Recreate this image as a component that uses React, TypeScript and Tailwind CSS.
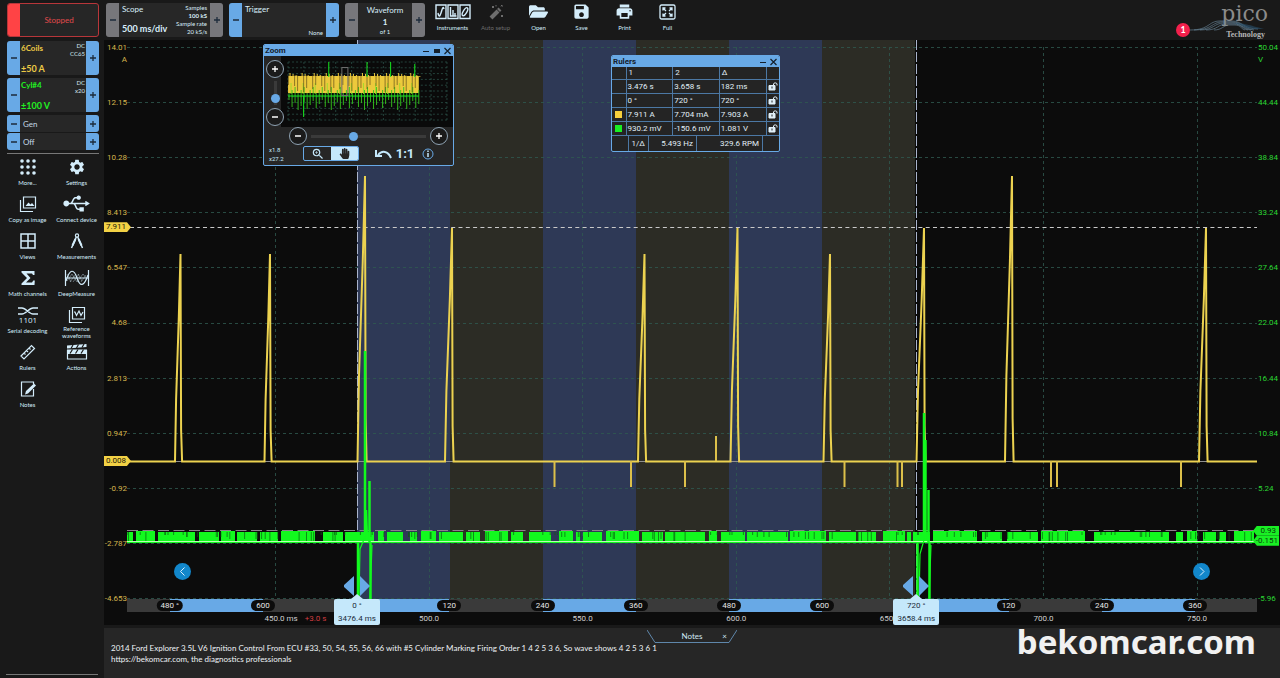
import type { FocusEvent, ReactNode } from "react";
import { FaFolderOpen, FaHandPaper, FaUsb } from "react-icons/fa";
import { MdPrint, MdSave, MdSettings, MdZoomIn } from "react-icons/md";

const LEFT_AXIS = ["14.01", "12.15", "10.28", "8.413", "6.547", "4.68", "2.813", "0.947", "-0.92", "-2.787", "-4.653"];
const RIGHT_AXIS = ["50.04", "44.44", "38.84", "33.24", "27.64", "22.04", "16.44", "10.84", "5.24", "", "-5.96"];

// degree strip under the plot, size in degrees
const PHASES: { label?: string; size: number; blue?: boolean }[] = [
  { size: 55 },
  { label: "480 °", size: 120, blue: true },
  { label: "600", size: 120 },
  { size: 120, blue: true },
  { label: "120", size: 120 },
  { label: "240", size: 120, blue: true },
  { label: "360", size: 120 },
  { label: "480", size: 120, blue: true },
  { label: "600", size: 120 },
  { size: 120, blue: true },
  { label: "120", size: 120 },
  { label: "240", size: 120, blue: true },
  { label: "360", size: 80 },
];

const TIMES: { label?: string; size: number }[] = [
  { size: 483 },
  { size: 500 },
  { label: "500.0", size: 500 },
  { label: "550.0", size: 500 },
  { label: "600.0", size: 500 },
  { label: "650.0", size: 500 },
  { label: "700.0", size: 500 },
  { label: "750.0", size: 195 },
];

// coil current pulses: start, peak x, peak y
const PULSES = [
  [48, 53.5, 214],
  [137.5, 143, 214],
  [230.5, 238, 136],
  [318, 325, 188],
  [511, 517.5, 214],
  [603.5, 610.5, 188],
  [696.5, 703, 214],
  [789.5, 797, 188],
  [878, 885, 136],
  [1072, 1079, 188],
];

const BLIPS = [
  [427.5, 447],
  [504, 447],
  [558, 447],
  [589, 396],
  [717.5, 447],
  [770.5, 447],
  [775, 447],
  [924, 447],
  [930, 447],
  [1054, 447],
];

// wide gaps in the green burst: x, width
const GAPS = [
  [6, 3], [28, 3], [68, 4], [92, 2], [108, 2], [130, 3], [151, 3], [188, 8], [216, 2], [247, 4], [257, 3],
  [276, 7], [290, 4], [309, 3], [336, 3], [353, 5], [381, 3], [396, 6], [424, 8], [446, 3], [453, 3],
  [475, 4], [512, 3], [536, 2], [578, 4], [590, 4], [618, 2], [661, 2], [699, 3], [729, 2], [749, 7],
  [778, 2], [784, 2], [803, 3], [850, 5], [875, 5], [911, 3], [958, 9], [1042, 7], [1056, 4], [1070, 6],
  [1089, 3], [1099, 8],
];

const SPLITS = Array.from({ length: 150 }, (_, i) => (i * 47.3 + ((i * i * 13) % 29)) % 1128);

const pulsePath = () => {
  let d = "M0 421.5";
  for (const [x, px, py] of PULSES) {
    const w = px - x;
    const h = 421 - py;
    d += `H${x}L${x + w * 0.2} ${421 - h * 0.3}L${x + w * 0.45} ${421 - h * 0.5}L${x + w * 0.7} ${421 - h * 0.7}L${px} ${py}L${px + 0.6} ${py + h * 0.85}L${px + 1.6} 421.5`;
  }
  return d + "H1131";
};

function Plus({ minus }: { minus?: boolean }) {
  return (
    <svg viewBox="0 0 8 8" className="size-2" stroke="currentColor" strokeWidth="1.3">
      <path d={minus ? "M1 4h6" : "M1 4h6M4 1v6"} />
    </svg>
  );
}

function Step({ minus, gray, label }: { minus?: boolean; gray?: boolean; label: string }) {
  return (
    <button
      type="button"
      aria-label={label}
      className={[
        "flex w-[13px] shrink-0 items-center justify-center text-[#1d2b3b]",
        gray ? "bg-[#77777b]" : "bg-[#68a9e6]",
      ].join(" ")}
    >
      <Plus minus={minus} />
    </button>
  );
}

function Panel({ gray, name, className, children }: { gray?: boolean; name: string; className: string; children: ReactNode }) {
  return (
    <div className={`flex overflow-hidden rounded-[3px] bg-[#272727] ${className}`}>
      <Step minus gray={gray} label={`${name} down`} />
      {children}
      <Step gray={gray} label={`${name} up`} />
    </div>
  );
}

function Channel({ name, range, info, color }: { name: string; range: string; info: string[]; color: string }) {
  return (
    <Panel name={name} className="h-[34px]">
      <div className={`flex flex-1 flex-col justify-between pt-px pl-px ${color}`}>
        <div className="flex justify-between">
          <span className="text-[8px] leading-3 font-bold">{name}</span>
          <span className="pr-px text-right text-[6px] leading-2 text-[#d3e3ec]">
            {info[0]}
            <br />
            {info[1]}
          </span>
        </div>
        <span className="text-[9px] leading-3 font-bold">{range}</span>
      </div>
    </Panel>
  );
}

function Icon({ children, wide }: { children: ReactNode; wide?: boolean }) {
  return (
    <svg
      viewBox={wide ? "0 0 28 18" : "0 0 18 18"}
      className={wide ? "h-[18px] w-7" : "size-[18px]"}
      fill="none"
      stroke="currentColor"
      strokeWidth="1.2"
    >
      {children}
    </svg>
  );
}

const TOOLS: { label: string; icon: ReactNode }[] = [
  {
    label: "More...",
    icon: (
      <Icon>
        {[3, 9, 15].map((y) => [3, 9, 15].map((x) => <circle key={`${x}-${y}`} cx={x} cy={y} r="1.8" fill="currentColor" stroke="none" />))}
      </Icon>
    ),
  },
  { label: "Settings", icon: <MdSettings className="size-[18px]" /> },
  {
    label: "Copy as image",
    icon: (
      <Icon>
        <path d="M4.5 2h12v11h-12zM1.5 5v11.5H14" />
        <path d="M6.500 11l3-3.500 2 2 1.500-1.500 2.500 3z" fill="currentColor" stroke="none" />
      </Icon>
    ),
  },
  { label: "Connect device", icon: <FaUsb className="h-[21px] w-[27px]" /> },
  {
    label: "Views",
    icon: (
      <Icon>
        <path d="M2 2h14v14H2zM9 2v14M2 9h14" strokeWidth="1.500" />
      </Icon>
    ),
  },
  {
    label: "Measurements",
    icon: (
      <Icon>
        <circle cx="9" cy="3.500" r="1.600" />
        <path d="M8.300 5L3.500 16M9.700 5l4.800 11" strokeWidth="1.500" />
        <path d="M7.500 7l-3 6.500M10.500 7l3 6.500" strokeWidth="2" />
      </Icon>
    ),
  },
  {
    label: "Math channels",
    icon: (
      <Icon>
        <path d="M2.500 2h13v4h-1.500l-1-1.500H7.500l4 4.500-4.500 4.500h6l1.300-2h1.500L15.500 16h-13v-1.500L8 9 2.500 3.500z" fill="currentColor" stroke="none" />
      </Icon>
    ),
  },
  {
    label: "DeepMeasure",
    icon: (
      <Icon wide>
        <path d="M2.500 1v16M25.500 1v16M2.500 9h23" />
        <path d="M3 12C7-1 11 0 14 9s7 9 11-3" />
        <path d="M4 12l5-7M7 13l6-8M10 13l6-8M14 13l6-8M18 13l5-7M4 5l4 8M9 5l5 8M15 5l4 7M20 5l4 5" strokeWidth="0.400" />
      </Icon>
    ),
  },
  {
    label: "Serial decoding",
    icon: (
      <svg viewBox="0 0 20 18" className="h-[18px] w-5" fill="none" stroke="currentColor" strokeWidth="1.300">
        <path d="M0 2h4c4 0 7 6 11 6h5M0 8h4C8 8 11 2 15 2h5" />
        <text x="10" y="17" textAnchor="middle" fill="currentColor" stroke="none" className="font-['Open_Sans'] text-[8px]">
          1101
        </text>
      </svg>
    ),
  },
  {
    label: "Reference waveforms",
    icon: (
      <Icon>
        <path d="M4.500 1.500h12v11.500h-12zM1.500 4v12.500H14" />
        <path d="M6 6h1l1.500 3.500L11 5l2 4.500L15 6" />
      </Icon>
    ),
  },
  {
    label: "Rulers",
    icon: (
      <Icon>
        <path d="M2 13L12.500 2.500l3 3L5 16zM5 10l1.500 1.500M7.500 7.500L9 9M10 5l1.500 1.500" />
      </Icon>
    ),
  },
  {
    label: "Actions",
    icon: (
      <svg viewBox="0 0 22 18" className="h-[18px] w-[22px]" fill="none" stroke="currentColor" strokeWidth="1.200">
        <path d="M1.500 7.500h19V16h-19z" />
        <path d="M1 2.500L20.500 1v3L1 5.500zM1 6.500h20V11H1z" fill="currentColor" stroke="none" />
        <path d="M5 5.500L7 2M10.500 5l2-3.500M16 4.500l2-3.500M4 10.500l2.500-4M9.500 10.500l2.500-4M15 10.500l2.500-4" stroke="#191919" />
      </svg>
    ),
  },
  {
    label: "Notes",
    icon: (
      <Icon>
        <path d="M14.500 9v7h-12V2h12v2" />
        <path d="M6 14.500l1-3.500 8-7.500 2 2-8 8z" fill="currentColor" stroke="none" />
      </Icon>
    ),
  },
];

const ACTIONS: { label: string; icon: ReactNode; off?: boolean }[] = [
  {
    label: "Instruments",
    icon: (
      <svg viewBox="0 0 36 16" className="h-4 w-9" fill="none" stroke="currentColor">
        <path d="M1 1h10v13.500H1zM13 1h10v13.500H13zM25 1h10v13.500H25z" strokeWidth="1.400" />
        <path d="M3 9c1 5 2 3 3 0s2-8 3-4M15.500 3v9h6M18 6v6M20 9v3" strokeWidth="1.400" />
        <ellipse cx="30" cy="7.700" rx="1.800" ry="4.500" transform="rotate(30 30 7.700)" strokeWidth="1.400" />
      </svg>
    ),
  },
  {
    label: "Auto setup",
    off: true,
    icon: (
      <svg viewBox="0 0 16 16" className="size-4" fill="none" stroke="currentColor">
        <path d="M3 14l7-7" strokeWidth="4" />
        <path d="M10.500 6.500l1.500-1.500" strokeWidth="4" />
        <path d="M4 2l2 2M6 2L4 4M13 1l1.500 1.500M14.500 1L13 2.500M13 11l2 2M15 11l-2 2M8 1v1.500" />
      </svg>
    ),
  },
  { label: "Open", icon: <FaFolderOpen className="h-[17px] w-[19px]" /> },
  { label: "Save", icon: <MdSave className="size-[19px]" /> },
  { label: "Print", icon: <MdPrint className="size-[19px]" /> },
  {
    label: "Full",
    icon: (
      <svg viewBox="0 0 17 16" className="h-4 w-[17px]" fill="none" stroke="currentColor" strokeWidth="1.300">
        <rect x="1" y="1" width="15" height="14" rx="1.500" />
        <path d="M4 6.500V4h2.500M4 4l3 3M10.500 4H13v2.500M13 4l-3 3M4 9.500V12h2.500M4 12l3-3M13 9.500V12h-2.500M13 12l-3-3" />
      </svg>
    ),
  },
];

function Sidebar() {
  return (
    <aside className="flex w-[104px] shrink-0 flex-col pt-[3px] pb-[3px]">
      <div className="flex-1 px-[7px]">
        <button
          type="button"
          className="flex h-[34px] w-[92px] overflow-hidden rounded-[3px] border border-[#b8363a] bg-[#262626] text-[8px] text-[#e04a4c]"
        >
          <span className="h-full w-3 shrink-0 bg-[#ff4345]" />
          <span className="flex h-full flex-1 items-center justify-center">Stopped</span>
        </button>
        <div className="mt-1 flex w-[92px] flex-col gap-[3px]">
          <Channel name="6Coils" range="±50 A" info={["DC", "CC65"]} color="text-[#edcb45]" />
          <Channel name="Cyl#4" range="±100 V" info={["DC", "x20"]} color="text-[#22f022]" />
          <div className="flex flex-col gap-px text-[8px] text-[#c3d8e4]">
            {["Gen", "Off"].map((t) => (
              <Panel key={t} name={t} className="h-[17px]">
                <span className="flex flex-1 items-center pl-[3px]">{t}</span>
              </Panel>
            ))}
          </div>
          <hr className="border-t border-[#777777]" />
        </div>
        <div className="mt-[2px] -ml-1 grid w-[98px] grid-cols-2">
          {TOOLS.map((t) => (
            <button
              key={t.label}
              type="button"
              className={[
                "flex h-[37px] flex-col items-center text-center text-[6px] text-[#d4edfb]",
                t.label === "Reference waveforms" ? "leading-[7px]" : "leading-3",
              ].join(" ")}
            >
              <span className="flex h-[21px] items-center">{t.icon}</span>
              <span>{t.label}</span>
            </button>
          ))}
        </div>
      </div>
      <hr className="mx-[6px] border-t border-[#777777]" />
    </aside>
  );
}

function Toolbar() {
  return (
    <header className="flex h-10 items-start pt-[3px] pl-[2px] text-[#d9eefa]">
      <Panel gray name="Scope" className="h-[34px] w-[117px]">
        <div className="flex flex-1 justify-between px-[3px]">
          <div className="flex flex-col justify-between whitespace-nowrap">
            <span className="text-[8px] leading-3">Scope</span>
            <span className="pb-[2px] text-[9px] leading-3 font-bold">500 ms/div</span>
          </div>
          <div className="-ml-4 pt-px text-right text-[6px] leading-2 whitespace-nowrap">
            Samples
            <br />
            <b>100 kS</b>
            <br />
            Sample rate
            <br />
            20 kS/s
          </div>
        </div>
      </Panel>
      <Panel name="Trigger" className="ml-[6px] h-[34px] w-[110px]">
        <div className="flex flex-1 flex-col justify-between px-[3px]">
          <span className="text-[8px] leading-3">Trigger</span>
          <span className="text-right text-[6px] leading-2">None</span>
        </div>
      </Panel>
      <Panel gray name="Waveform" className="ml-[6px] h-[34px] w-20">
        <div className="flex flex-1 flex-col items-center text-[8px]">
          <span className="pt-px leading-3">Waveform</span>
          <b className="leading-3">1</b>
          <span className="text-[6px] leading-2">of 1</span>
        </div>
      </Panel>
      <nav className="ml-[6px] flex">
        {ACTIONS.map((a) => (
          <button
            key={a.label}
            type="button"
            className={[
              "flex w-[43px] flex-col items-center text-[6px] leading-2",
              a.off ? "text-[#6d6d6d]" : "text-[#d4edfb]",
            ].join(" ")}
          >
            <span className="flex h-[21px] items-center pb-1">{a.icon}</span>
            {a.label}
          </button>
        ))}
      </nav>
      <div className="relative mr-[8px] ml-auto">
        <svg viewBox="0 0 96 36" className="h-9 w-24 overflow-visible">
          <text x="92" y="18" textAnchor="end" fill="#8b8b8b" className="font-['DejaVu_Serif'] text-[22px]">
            pico
          </text>
          <g fill="none" stroke="#6f8fa5" strokeWidth="0.600">
            <path d="M14 27C34 27 32 18 44 18h12c10 0 12 8 26 8" />
            <path d="M18 27c18 0 18-8 28-8h10c10 0 12 7 22 8" />
            <path d="M24 27c14 0 14-7 24-7h9c8 0 10 6 18 7" />
            <path d="M30 27c12 0 12-6 20-6h8c8 0 8 5 14 6" />
            <path d="M38 27c8 0 10-5 15-5h6c6 0 6 4 10 5" />
          </g>
          <path d="M54 20c14 0 10 7 34 6-16-4-18-6-34-6z" fill="#28506c" opacity="0.600" />
          <text x="89" y="34" textAnchor="end" fill="#b5b5b5" className="font-['Liberation_Serif'] text-[8px] font-bold">
            Technology
          </text>
        </svg>
        <span className="absolute top-5 left-0 flex size-[14px] items-center justify-center rounded-full bg-[#f3204c] text-[9px] font-bold text-white">
          1
        </span>
      </div>
    </header>
  );
}

function Traces() {
  return (
    <svg viewBox="0 0 1130 559" preserveAspectRatio="none" className="absolute inset-0 size-full" fill="none">
      {[230, 416, 602].map((x) => (
        <rect key={x} x={x} width="93" height="559" fill="#2e3956" />
      ))}
      {[323, 509, 695].map((x) => (
        <rect key={x} x={x} width="93" height="559" fill="#2c2c25" />
      ))}
      <g stroke="#2f5a50" strokeDasharray="3 3" opacity="0.800">
        {LEFT_AXIS.map((l, i) => (
          <path key={l} d={`M0 ${7.5 + Math.round(i * 55.1)}H1130`} />
        ))}
        {[148.5, 302.5, 455.5, 609.5, 762.5, 916.5, 1070.5].map((x) => (
          <path key={x} d={`M${x} 7V559`} />
        ))}
      </g>
      <path d="M3 187.500H1130" stroke="#c9c9c9" strokeDasharray="4 3.300" />
      <path d="M230.500 0V559M789.500 0V559" stroke="#aab4cc" strokeDasharray="10 2" />
      <path d="M0 421.500H1130" stroke="#8f8f8f" />

      <path d={pulsePath()} stroke="#ecd250" strokeWidth="2" />
      <g stroke="#dcc04a" strokeWidth="2">
        {BLIPS.map(([x, y]) => (
          <path key={x} d={`M${x} 421V${y}`} />
        ))}
      </g>

      <g stroke="none" fill="#12f91e">
        {GAPS.map(([x, w], i) => {
          const end = GAPS[i + 1] ? GAPS[i + 1][0] : 1127;
          return <rect key={x} x={x + w} y={i % 3 ? 492 : 491} width={end - x - w} height="10" />;
        })}
        <rect y="492" width="6" height="10" />
        <rect y="501" width="1130" height="2" />
      </g>
      <g stroke="#0b5c12" strokeWidth="0.700">
        {SPLITS.map((x, i) => (
          <path key={i} d={`M${x} 492v${3 + (i % 4) * 2}`} />
        ))}
      </g>
      <path d="M0 490.500H1130" stroke="#8d7f8c" strokeDasharray="11 4.500" />
      <path d="M0 501.500H1130" stroke="#b9ffb4" />

      <g stroke="#12f91e" strokeWidth="2.500">
        <path d="M231 502V559M243.500 559V502M238 311V495M239 470l1 30M242.500 441V502M790.500 502V559M802.500 559V502M797 373V495M798.500 400V500M801.500 450V502" />
        <path d="M232 559l1-50 5-12M243 559l2-54M792 559l1-45 4-14M802 559l2-54" strokeWidth="1.200" />
      </g>
    </svg>
  );
}

function CursorFlag({ deg, time, className }: { deg: string; time: string; className: string }) {
  return (
    <div className={`absolute top-full z-10 w-[46px] -translate-x-1/2 ${className}`}>
      <svg viewBox="0 0 26 24" className="absolute bottom-full left-[10px] h-6 w-[26px]">
        <path d="M10 1v20L-1 11zM16 1v20l10-10z" fill="#68a9e6" />
        <path d="M13 19l6 5H7z" fill="#c5e8fb" />
      </svg>
      <div className="rounded-[2px] bg-[#c5e8fb] text-center text-[8px] leading-[13px] text-[#1c2c3a]">
        <div>{deg}</div>
        <div>{time}</div>
      </div>
    </div>
  );
}

function RoundButton({ minus, label }: { minus?: boolean; label: string }) {
  return (
    <button
      type="button"
      aria-label={label}
      className="flex size-[18px] shrink-0 items-center justify-center rounded-full border border-[#8fa3b3] bg-[#1b1b1b] text-white"
    >
      <Plus minus={minus} />
    </button>
  );
}

function TitleBar({ title, max }: { title: string; max?: boolean }) {
  return (
    <div className="flex h-[11px] items-center justify-between bg-[#68a9e6] px-px text-[8px] leading-[11px] text-[#14202c]">
      <span className="font-bold">{title}</span>
      <svg viewBox="0 0 30 10" className="h-[10px] w-[30px]" fill="none" stroke="currentColor">
        <path d={max ? "M1 5.500h6" : "M12 5.500h6"} />
        {max && <path d="M12 5h6" strokeWidth="4" />}
        <path d="M22.500 2l6 6M28.500 2l-6 6" strokeWidth="1.200" />
      </svg>
    </div>
  );
}

const THUMB =
  "appearance-none [&::-webkit-slider-thumb]:size-[9px] [&::-webkit-slider-thumb]:appearance-none [&::-webkit-slider-thumb]:rounded-full [&::-webkit-slider-thumb]:bg-[#68a9e6]";

function Overview() {
  return (
    <svg viewBox="0 0 171 71" preserveAspectRatio="none" className="h-[71px] min-w-0 flex-1 bg-[#0a0a0a]" fill="none">
      <g stroke="#2f5a50" strokeWidth="0.700" strokeDasharray="2 2">
        {Array.from({ length: 11 }, (_, i) => (
          <path key={i} d={`M${7 + i * 15.8} 6V64M7 ${6 + i * 5.8}H165`} />
        ))}
      </g>
      <rect x="7" y="20" width="130" height="17" fill="#ecc93c" />
      {Array.from({ length: 44 }, (_, i) => (
        <g key={i}>
          <path d={`M${8 + i * 3} ${37 - (i % 3) * 3}V${44 + ((i * 7) % 11)}`} stroke="#35c81c" strokeWidth="0.900" />
          <path d={`M${9 + i * 3} 21V${17 + ((i * 5) % 4)}`} stroke="#ecc93c" />
          {i % 3 !== 1 && <path d={`M${7.5 + i * 3} 19v${10 + ((i * 5) % 9)}`} stroke="#4f4016" strokeWidth="0.600" />}
          {i % 4 === 0 && <path d={`M${10 + i * 3} 38v-11`} stroke="#9ddb2a" strokeWidth="0.900" />}
        </g>
      ))}
      <path d="M7 40H137M47.500 6v15M85.500 6v15M109 6v15M133 8v13M22.500 40v21" stroke="#16e81e" />
      <rect x="60.500" y="11.500" width="6" height="28" stroke="#6d6d6d" />
    </svg>
  );
}

function ZoomWindow() {
  return (
    <section className="absolute top-[4px] left-[136px] z-20 w-[191px] overflow-hidden rounded-[2px] border border-[#68a9e6] bg-[#262626]">
      <TitleBar title="Zoom" max />
      <div className="flex">
        <div className="relative z-10 flex w-[17px] flex-col items-center justify-between pt-[4px] pb-px pl-[5px]">
          <RoundButton label="Zoom in vertically" />
          <input
            type="range"
            aria-label="Vertical zoom"
            defaultValue={12}
            className={`h-6 w-[3px] bg-[#3a3a3a] [direction:rtl] [writing-mode:vertical-lr] ${THUMB}`}
          />
          <RoundButton minus label="Zoom out vertically" />
        </div>
        <Overview />
      </div>
      <div className="flex items-center gap-[4px] pr-[5px] pl-[25px]">
        <RoundButton minus label="Zoom out horizontally" />
        <input type="range" aria-label="Horizontal zoom" defaultValue={36} className={`h-[3px] min-w-0 flex-1 bg-[#3a3a3a] ${THUMB}`} />
        <RoundButton label="Zoom in horizontally" />
      </div>
      <div className="flex h-[20px] items-center pb-[3px] pl-[5px] text-[#c5e8fb]">
        <span className="w-[34px] text-[6px] leading-[9px]">
          x1.8
          <br />
          x27.2
        </span>
        <div className="flex h-[15px] w-14 overflow-hidden rounded-[2px] border border-[#68a9e6]">
          <button type="button" aria-label="Zoom tool" className="flex flex-1 items-center justify-center">
            <MdZoomIn className="size-[14px]" />
          </button>
          <button type="button" aria-label="Pan tool" className="flex flex-1 items-center justify-center bg-[#c5e8fb] text-[#262626]">
            <FaHandPaper className="size-[11px]" />
          </button>
        </div>
        <button type="button" aria-label="Undo zoom" className="ml-[15px]">
          <svg viewBox="0 0 18 10" className="h-[10px] w-[18px]" fill="none" stroke="currentColor" strokeWidth="2">
            <path d="M4 6c4-5 10-4 13 3M2 1v6h6" />
          </svg>
        </button>
        <button type="button" className="ml-[3px] w-[20px] text-center text-[13px] leading-4 font-bold">
          1:1
        </button>
        <button type="button" aria-label="Info" className="ml-[7px]">
          <svg viewBox="0 0 12 12" className="size-3" fill="none" stroke="currentColor">
            <circle cx="6" cy="6" r="5" stroke="#68a9e6" />
            <path d="M6 5v4M6 2.500v1.500" strokeWidth="1.500" />
          </svg>
        </button>
      </div>
    </section>
  );
}

const RULER_ROWS: { color?: string; cells: string[] }[] = [
  { cells: ["3.476 s", "3.658 s", "182 ms"] },
  { cells: ["0 °", "720 °", "720 °"] },
  { color: "bg-[#f5cf3c]", cells: ["7.911 A", "7.704 mA", "7.903 A"] },
  { color: "bg-[#19ef24]", cells: ["930.2 mV", "-150.6 mV", "1.081 V"] },
];

function RulersWindow() {
  return (
    <section className="absolute top-[15px] left-[484px] z-20 w-[169px] overflow-hidden rounded-[2px] border border-[#68a9e6] bg-[#242424] text-[8px] text-[#e0eff7]">
      <TitleBar title="Rulers" />
      <table className="w-full table-fixed border-collapse leading-3">
        <thead>
          <tr className="h-3 divide-x divide-[#4c78a4] text-left">
            <th className="w-[14px]" />
            <th className="pl-[2px] font-normal">1</th>
            <th className="pl-[2px] font-normal">2</th>
            <th className="pl-[2px] font-normal">Δ</th>
            <th className="w-[13px]" />
          </tr>
        </thead>
        <tbody>
          {RULER_ROWS.map((r) => (
            <tr key={r.cells[0]} className="h-[14px] divide-x divide-[#4c78a4] border-y border-[#4c78a4]">
              <td>{r.color && <span className={`mx-auto block size-[7px] ${r.color}`} />}</td>
              {r.cells.map((c, i) => (
                <td key={i} className="pl-px whitespace-nowrap">
                  {c}
                </td>
              ))}
              <td>
                <svg viewBox="0 0 10 9" className="mx-auto h-[9px] w-[10px]" fill="none" stroke="currentColor">
                  <path d="M1 3.500h6V8H1z" fill="currentColor" />
                  <path d="M5.500 3.500V2c0-1.500 3.500-1.500 3.500 0v1.500" />
                  <path d="M4 4.500v2" stroke="#242424" />
                </svg>
              </td>
            </tr>
          ))}
        </tbody>
      </table>
      <div className="flex h-[15px] divide-x divide-[#4c78a4] text-right leading-[15px]">
        <span className="w-[17px]" />
        <span className="w-[20px] pr-[3px]">1/Δ</span>
        <span className="w-12 pr-[3px]">5.493 Hz</span>
        <span className="w-[66px] pr-[3px]">329.6 RPM</span>
        <span />
      </div>
    </section>
  );
}

function Chart() {
  return (
    <main className="grid flex-1 grid-cols-[23px_1fr_23px] grid-rows-[1fr_13px_13px] bg-[#0c0c0c] font-['Roboto',sans-serif] text-[8px]">
      <div className="row-span-2 flex flex-col justify-between pt-px pb-[6px] text-right leading-[14px] text-[#d6b64e]">
        {LEFT_AXIS.map((l, i) => (
          <span key={l} className="relative flex justify-end">
            {l}
            {i === 0 && <span className="absolute top-3 right-0">A</span>}
          </span>
        ))}
      </div>

      <div className="relative">
        <Traces />
        <span className="absolute top-[33.500%] right-full z-10 -mr-1 w-[27px] -translate-y-1/2 bg-[#f2d145] pl-[2px] leading-[10px] text-[#1d1a08] [clip-path:polygon(0_0,85%_0,100%_50%,85%_100%,0_100%)]">
          7.911
        </span>
        <span className="absolute top-[75.300%] right-full z-10 -mr-1 w-[27px] -translate-y-1/2 bg-[#f2d145] pl-[2px] leading-[10px] text-[#1d1a08] [clip-path:polygon(0_0,85%_0,100%_50%,85%_100%,0_100%)]">
          0.008
        </span>
        <span className="absolute top-[87.800%] left-full z-10 -ml-1 w-[26px] -translate-y-1/2 bg-[#19ef24] pr-[3px] text-right leading-[10px] text-[#0a3a0c] [clip-path:polygon(15%_0,100%_0,100%_100%,15%_100%,0_50%)]">
          0.93
        </span>
        <span className="absolute top-[89.600%] left-full z-10 -ml-1 w-[26px] -translate-y-1/2 bg-[#19ef24] pr-px text-right leading-[10px] text-[#0a3a0c] [clip-path:polygon(15%_0,100%_0,100%_100%,15%_100%,0_50%)]">
          -0.151
        </span>

        <button type="button" aria-label="Previous" className="absolute bottom-[19px] left-[47px] z-10 size-[17px] rounded-full bg-[#1287cb]">
          <svg viewBox="0 0 17 17" fill="none" stroke="#d9f0ff">
            <path d="M10.500 4.500l-4 4 4 4" />
          </svg>
        </button>
        <button type="button" aria-label="Next" className="absolute right-[47px] bottom-[19px] z-10 size-[17px] rounded-full bg-[#1287cb]">
          <svg viewBox="0 0 17 17" fill="none" stroke="#d9f0ff">
            <path d="M7 4.500l4 4-4 4" />
          </svg>
        </button>
        <CursorFlag deg="0 °" time="3476.4 ms" className="left-[20.350%]" />
        <CursorFlag deg="720 °" time="3658.4 ms" className="left-[69.850%]" />
        <ZoomWindow />
        <RulersWindow />
      </div>

      <div className="row-span-2 flex flex-col justify-between pt-px pb-[6px] pl-px leading-[14px] text-[#2bd633]">
        {RIGHT_AXIS.map((l, i) => (
          <span key={i} className="relative block h-[14px]">
            {l}
            {i === 0 && <span className="absolute top-3 left-0">V</span>}
          </span>
        ))}
      </div>

      <div className="flex">
        {PHASES.map((p, i) => (
          <div
            key={i}
            className={["relative basis-0", p.blue ? "bg-[#68a9e6]" : "bg-[#3a3a3a]"].join(" ")}
            style={{ flexGrow: p.size }}
          >
            {p.label && (
              <span className="absolute top-px left-0 z-[5] min-w-6 -translate-x-1/2 rounded-full bg-[#0c0c0c] px-1 text-center leading-[11px] whitespace-nowrap text-[#e6e6e6]">
                {p.label}
              </span>
            )}
          </div>
        ))}
      </div>

      <div className="col-start-2 flex text-[#d0d0d0]">
        {TIMES.map((t, i) => (
          <div key={i} className="relative basis-0 leading-[14px]" style={{ flexGrow: t.size }}>
            {t.label && <span className="absolute left-0 -translate-x-1/2">{t.label}</span>}
            {i === 1 && (
              <span className="absolute -left-[11px] flex gap-[7px] whitespace-nowrap">
                450.0 ms <span className="text-[#d03c40]">+3.0 s</span>
              </span>
            )}
          </div>
        ))}
      </div>
    </main>
  );
}

const NOTE = `2014 Ford Explorer 3.5L V6 Ignition Control From ECU #33, 50, 54, 55, 56, 66 with #5 Cylinder Marking Firing Order 1 4 2 5 3 6, So wave shows 4 2 5 3 6 1
https://bekomcar.com, the diagnostics professionals`;

function Notes() {
  const toEnd = (e: FocusEvent<HTMLTextAreaElement>) => e.target.setSelectionRange(NOTE.length, NOTE.length);

  return (
    <section className="relative h-[53px] shrink-0 border-t-[3px] border-[#191919] bg-[#262626]">
      <div className="relative mx-auto flex h-[15px] w-[90px] items-center justify-center text-[8px] text-[#d2e8f5]">
        <svg viewBox="0 0 90 15" className="absolute inset-0 size-full" fill="none" stroke="#5f87ab">
          <path d="M0 2l8 12.500h74L90 2" />
        </svg>
        <label htmlFor="notes">Notes</label>
        <button type="button" aria-label="Close notes" className="absolute right-[10px]">
          ×
        </button>
      </div>
      <textarea
        id="notes"
        autoFocus
        onFocus={toEnd}
        spellCheck={false}
        defaultValue={NOTE}
        className="block h-[24px] w-full resize-none overflow-hidden bg-transparent pl-[7px] text-[8px] leading-[11px] text-[#eef3f6] outline-none"
      />
      <div className="absolute right-[24px] bottom-[20px] font-['Noto_Sans',sans-serif] text-[33px] leading-[33px] font-bold text-[#f1f1f1]">
        bekomcar.com
      </div>
    </section>
  );
}

export default function App() {
  return (
    <div className="flex min-h-screen bg-[#191919] font-['Lato',sans-serif]">
      <Sidebar />
      <div className="flex min-w-0 flex-1 flex-col">
        <Toolbar />
        <Chart />
        <Notes />
      </div>
    </div>
  );
}
